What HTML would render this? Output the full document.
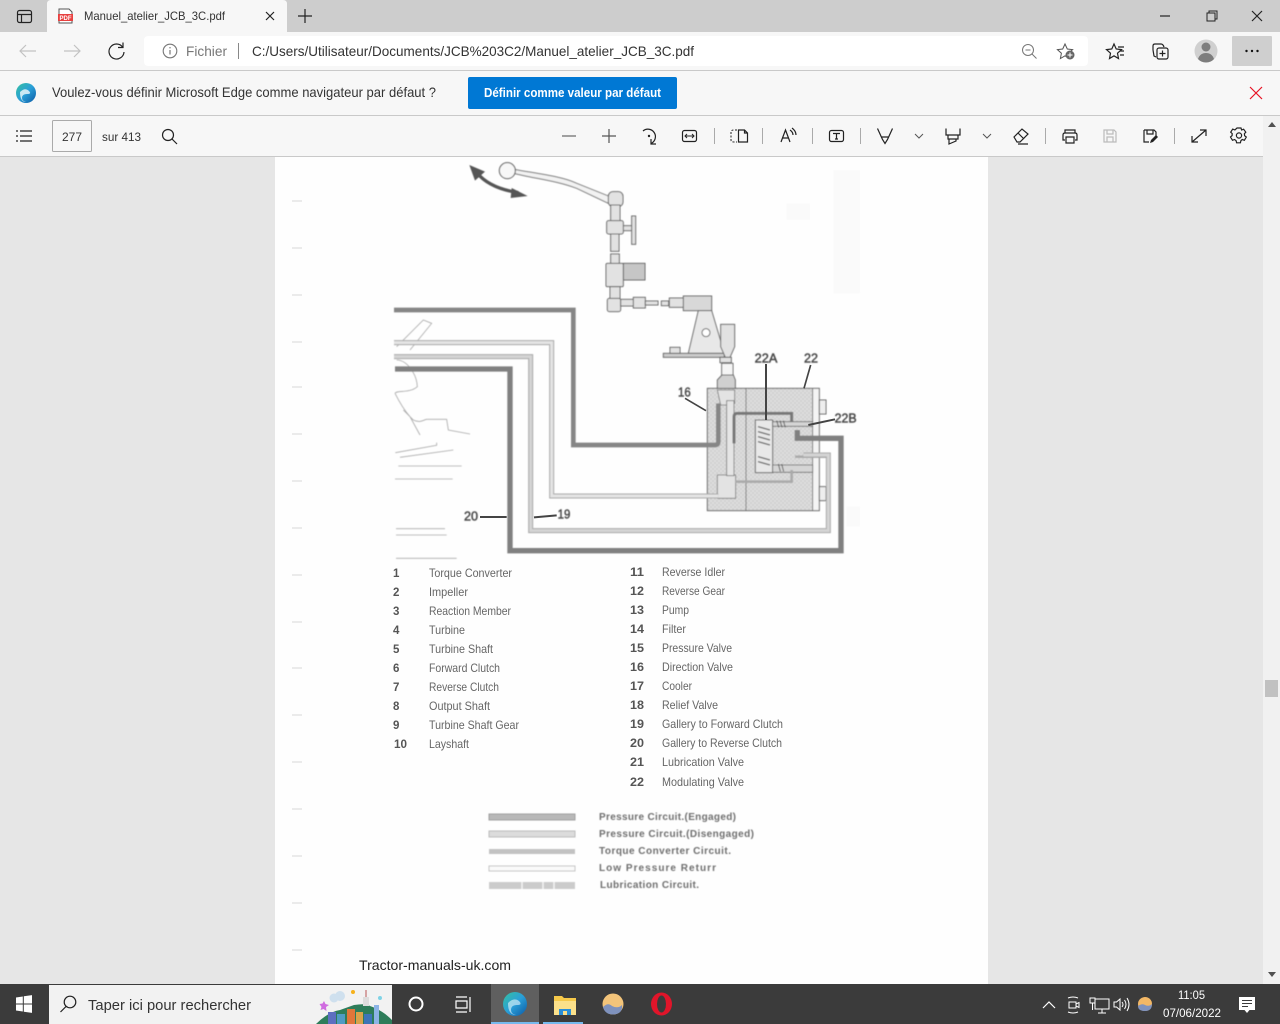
<!DOCTYPE html>
<html lang="fr"><head><meta charset="utf-8"><title>Manuel_atelier_JCB_3C.pdf</title>
<style>
html,body{margin:0;padding:0;width:1280px;height:1024px;overflow:hidden;background:#e6e6e6}
svg{display:block;position:absolute;left:0;top:0}
text{font-family:"Liberation Sans",sans-serif}
.i{fill:none;stroke:#222;stroke-width:1.2}
.l{font-size:12px;fill:#666}
.n{font-size:11.5px;fill:#555;font-weight:bold}
.k{font-size:10px;fill:#6e6e6e;font-weight:bold}
</style></head><body>
<svg width="1280" height="1024" viewBox="0 0 1280 1024" xmlns="http://www.w3.org/2000/svg">
<defs>
<pattern id="dots" width="12" height="12" patternUnits="userSpaceOnUse"><rect width="12" height="12" fill="#d2d2d2"/><circle cx="3" cy="3" r="2.600" fill="#e6e6e6"/><circle cx="9" cy="9" r="2.600" fill="#e6e6e6"/></pattern>
<filter id="b" x="-2%" y="-2%" width="104%" height="104%"><feGaussianBlur stdDeviation="1.500"/></filter>
<filter id="s" x="-2%" y="-20%" width="104%" height="140%"><feGaussianBlur stdDeviation=".35"/></filter>
<filter id="s2" x="-2%" y="-20%" width="104%" height="140%"><feGaussianBlur stdDeviation=".5"/></filter>
<linearGradient id="edge" x1="0" y1="0" x2="1" y2="1"><stop offset="0" stop-color="#35c1a0"/><stop offset=".5" stop-color="#2a9fd8"/><stop offset="1" stop-color="#0c59a4"/></linearGradient>
</defs>

<!-- Viewer background -->
<rect x="0" y="156" width="1263" height="828" fill="#e6e6e6"/>
<rect x="275" y="157" width="713" height="827" fill="#fefefe"/>
<rect x="1263" y="116" width="17" height="868" fill="#f1f1f1"/>
<rect x="1265" y="680" width="13" height="17" fill="#c1c1c1"/>
<path d="M1268 127l4-5 4 5zM1268 972l4 5 4-5z" fill="#505050"/>

<!-- Margin marks -->
<g stroke="#d8d8d8" stroke-width="1" fill="none">
<path d="M292 201h10M292 248h10M292 295h10M292 342h10M292 387h10M292 434h10M292 481h10M292 528h10M292 575h10M292 622h10M292 668h10M292 715h10M292 762h10M292 809h10M292 856h10M292 903h10M292 950h10"/>
</g>

<!-- Diagram, coordinates in 3x space -->
<g transform="translate(390 160) scale(.33333)">
<g filter="url(#b)">
<!-- scan noise -->
<g fill="#fafafa"><rect x="1330" y="30" width="80" height="370"/><rect x="1190" y="130" width="70" height="50"/><rect x="1370" y="1040" width="40" height="60"/></g>
<!-- left line fragments -->
<g fill="none" stroke="#aaa" stroke-width="2.500">
<path d="M20 600C50 600 80 640 82 680C60 700 20 690 15 700M15 700C30 730 42 750 60 770L90 825M40 750L70 780C90 790 100 780 110 778H170L175 810L240 822"/>
<path d="M16 878L140 856V848M30 892L190 870M25 918H215M15 957H188M18 1106H165M18 1125H170M18 1195H200M20 560L100 480L125 490L60 570"/>
</g>
<!-- valve block -->
<rect x="952" y="685" width="316" height="367" fill="url(#dots)"/>
<rect x="1268" y="685" width="20" height="367" fill="#f4f4f4"/>
<rect x="952" y="685" width="336" height="367" fill="none" stroke="#666" stroke-width="3"/>
<path d="M1068 685V1052M1268 685V1052" stroke="#666" stroke-width="2.500"/>
<path d="M1288 720h20v42h-20zM1288 980h20v42h-20z" fill="#eee" stroke="#666" stroke-width="3"/>
<path d="M982 690h52v40h-10v215h-10V735h-22zM982 945h55v70H982z" fill="#e3e3e3" stroke="#777" stroke-width="2.500"/>
<rect x="1010" y="722" width="22" height="225" fill="#e5e5e5" stroke="#777" stroke-width="2.500"/>
<rect x="1096" y="780" width="52" height="158" fill="#e8e8e8" stroke="#666" stroke-width="3"/>
<path d="M1104 800l36 10M1104 815l36 10M1104 830l36 10M1104 845l36 10M1104 890l36 10M1104 905l36 10" stroke="#666" stroke-width="4"/>
<path d="M1148 785h120v14h-120zM1148 915h120v22h-120z" fill="#d5d5d5" stroke="#666" stroke-width="2.500"/>
<path d="M1160 782l6 20M1170 782l6 20M1180 782l6 20M1165 912l6 22M1175 912l6 22" stroke="#444" stroke-width="2.500"/>
<path d="M1032 850V770Q1032 760 1042 760H1205V785" fill="none" stroke="#777" stroke-width="9"/>
<path d="M1035 965H1205V930M1215 890H1320" fill="none" stroke="#aaa" stroke-width="8"/>
<!-- pipes -->
<g fill="none" stroke-linejoin="miter">
<path d="M12 450H550V855H975Q985 855 985 845V730" stroke="#868686" stroke-width="14"/>
<path d="M12 548H485V1008H985" stroke="#a8a8a8" stroke-width="15"/>
<path d="M12 548H485V1008H985" stroke="#e4e4e4" stroke-width="9"/>
<path d="M12 590H422V1112H1315V885H1240" stroke="#a8a8a8" stroke-width="15"/>
<path d="M12 590H422V1112H1315V885H1240" stroke="#d4d4d4" stroke-width="9"/>
<path d="M15 627H360V1172H1353V835H1222V810" stroke="#808080" stroke-width="16"/>
</g>
<!-- lever -->
<path d="M262 40Q300 85 385 98" fill="none" stroke="#555" stroke-width="10"/>
<path d="M238 15L285 35L255 62zM413 108L365 84L362 114z" fill="#555"/>
<path d="M372 28C450 42 520 50 560 70L665 112L655 130L560 85C500 62 430 55 372 40z" fill="#f2f2f2" stroke="#777" stroke-width="3"/>
<circle cx="352" cy="32" r="24" fill="#f7f7f7" stroke="#555" stroke-width="3"/>
<g fill="#e2e2e2" stroke="#666" stroke-width="3">
<rect x="655" y="95" width="44" height="45" rx="14"/>
<rect x="662" y="135" width="28" height="50"/>
<rect x="690" y="197" width="36" height="15"/>
<rect x="725" y="168" width="12" height="85"/>
<rect x="650" y="182" width="50" height="40" rx="6"/>
<rect x="662" y="222" width="25" height="52"/>
<rect x="700" y="310" width="65" height="50" fill="#c6c6c6"/>
<path d="M662 282L688 282V320H662z"/>
<rect x="648" y="310" width="52" height="70" rx="4"/>
<rect x="660" y="380" width="30" height="60"/>
<rect x="652" y="415" width="40" height="40" rx="6"/>
<rect x="692" y="418" width="40" height="20"/>
<rect x="730" y="412" width="36" height="32"/>
<rect x="766" y="423" width="38" height="12"/>
<rect x="814" y="423" width="22" height="14"/>
<rect x="838" y="414" width="44" height="28"/>
<rect x="880" y="408" width="85" height="44" fill="#d8d8d8"/>
<path d="M925 452H965L1003 580H895z" fill="#e8e8e8"/>
<circle cx="948" cy="518" r="12" fill="#fff"/>
<rect x="820" y="580" width="183" height="12" fill="#ccc"/>
<rect x="840" y="562" width="30" height="18"/>
<path d="M992 493H1034V560L1020 592H1006L992 560z"/>
<rect x="990" y="592" width="34" height="16"/>
<rect x="995" y="610" width="34" height="36" fill="#f5f5f5"/>
<path d="M982 685V660L996 645H1030L1036 660V685z" fill="#d0d0d0"/>
</g>
</g>
<!-- leaders -->
<g stroke="#444" fill="none">
<path d="M1128 612V780" stroke-width="6"/><path d="M1262 615L1242 685" stroke-width="5"/>
<path d="M1335 778L1255 795" stroke-width="6"/><path d="M885 715L948 752" stroke-width="5"/>
<path d="M270 1071H350" stroke-width="6"/><path d="M500 1066L432 1072" stroke-width="6"/>
</g>
<g fill="#4a4a4a" stroke="#4a4a4a" stroke-width="1.500" font-size="38" filter="url(#b)">
<text x="1094" y="608" textLength="68" lengthAdjust="spacingAndGlyphs">22A</text>
<text x="1242" y="608" textLength="42" lengthAdjust="spacingAndGlyphs">22</text>
<text x="864" y="710" textLength="38" lengthAdjust="spacingAndGlyphs">16</text>
<text x="1334" y="787" textLength="66" lengthAdjust="spacingAndGlyphs">22B</text>
<text x="222" y="1081" textLength="42" lengthAdjust="spacingAndGlyphs">20</text>
<text x="503" y="1076" textLength="38" lengthAdjust="spacingAndGlyphs">19</text>
</g>
</g>

<!-- Legend list -->
<g filter="url(#s)">
<text class="n" x="393" y="577">1</text><text class="l" x="429" y="577" textLength="83" lengthAdjust="spacingAndGlyphs">Torque Converter</text>
<text class="n" x="393" y="596">2</text><text class="l" x="429" y="596" textLength="39" lengthAdjust="spacingAndGlyphs">Impeller</text>
<text class="n" x="393" y="615">3</text><text class="l" x="429" y="615" textLength="82" lengthAdjust="spacingAndGlyphs">Reaction Member</text>
<text class="n" x="393" y="634">4</text><text class="l" x="429" y="634" textLength="36" lengthAdjust="spacingAndGlyphs">Turbine</text>
<text class="n" x="393" y="653">5</text><text class="l" x="429" y="653" textLength="64" lengthAdjust="spacingAndGlyphs">Turbine Shaft</text>
<text class="n" x="393" y="672">6</text><text class="l" x="429" y="672" textLength="71" lengthAdjust="spacingAndGlyphs">Forward Clutch</text>
<text class="n" x="393" y="691">7</text><text class="l" x="429" y="691" textLength="70" lengthAdjust="spacingAndGlyphs">Reverse Clutch</text>
<text class="n" x="393" y="710">8</text><text class="l" x="429" y="710" textLength="61" lengthAdjust="spacingAndGlyphs">Output Shaft</text>
<text class="n" x="393" y="729">9</text><text class="l" x="429" y="729" textLength="90" lengthAdjust="spacingAndGlyphs">Turbine Shaft Gear</text>
<text class="n" x="394" y="748" textLength="13" lengthAdjust="spacingAndGlyphs">10</text><text class="l" x="429" y="748" textLength="40" lengthAdjust="spacingAndGlyphs">Layshaft</text>

<text class="n" x="630" y="576" textLength="14" lengthAdjust="spacingAndGlyphs">11</text><text class="l" x="662" y="576" textLength="63" lengthAdjust="spacingAndGlyphs">Reverse Idler</text>
<text class="n" x="630" y="595" textLength="14" lengthAdjust="spacingAndGlyphs">12</text><text class="l" x="662" y="595" textLength="63" lengthAdjust="spacingAndGlyphs">Reverse Gear</text>
<text class="n" x="630" y="614" textLength="14" lengthAdjust="spacingAndGlyphs">13</text><text class="l" x="662" y="614" textLength="27" lengthAdjust="spacingAndGlyphs">Pump</text>
<text class="n" x="630" y="633" textLength="14" lengthAdjust="spacingAndGlyphs">14</text><text class="l" x="662" y="633" textLength="24" lengthAdjust="spacingAndGlyphs">Filter</text>
<text class="n" x="630" y="652" textLength="14" lengthAdjust="spacingAndGlyphs">15</text><text class="l" x="662" y="652" textLength="70" lengthAdjust="spacingAndGlyphs">Pressure Valve</text>
<text class="n" x="630" y="671" textLength="14" lengthAdjust="spacingAndGlyphs">16</text><text class="l" x="662" y="671" textLength="71" lengthAdjust="spacingAndGlyphs">Direction Valve</text>
<text class="n" x="630" y="690" textLength="14" lengthAdjust="spacingAndGlyphs">17</text><text class="l" x="662" y="690" textLength="30" lengthAdjust="spacingAndGlyphs">Cooler</text>
<text class="n" x="630" y="709" textLength="14" lengthAdjust="spacingAndGlyphs">18</text><text class="l" x="662" y="709" textLength="56" lengthAdjust="spacingAndGlyphs">Relief Valve</text>
<text class="n" x="630" y="728" textLength="14" lengthAdjust="spacingAndGlyphs">19</text><text class="l" x="662" y="728" textLength="121" lengthAdjust="spacingAndGlyphs">Gallery to Forward Clutch</text>
<text class="n" x="630" y="747" textLength="14" lengthAdjust="spacingAndGlyphs">20</text><text class="l" x="662" y="747" textLength="120" lengthAdjust="spacingAndGlyphs">Gallery to Reverse Clutch</text>
<text class="n" x="630" y="766" textLength="14" lengthAdjust="spacingAndGlyphs">21</text><text class="l" x="662" y="766" textLength="82" lengthAdjust="spacingAndGlyphs">Lubrication Valve</text>
<text class="n" x="630" y="786" textLength="14" lengthAdjust="spacingAndGlyphs">22</text><text class="l" x="662" y="786" textLength="82" lengthAdjust="spacingAndGlyphs">Modulating Valve</text>
</g>

<!-- Circuit legend -->
<g filter="url(#s2)">
<rect x="489" y="814" width="86" height="6" fill="#b8b8b8" stroke="#a0a0a0"/>
<rect x="489" y="831" width="86" height="6" fill="#dcdcdc" stroke="#bbb"/>
<rect x="489" y="849" width="86" height="5" fill="#c2c2c2"/>
<rect x="489" y="866" width="86" height="5" fill="#fafafa" stroke="#c4c4c4"/>
<rect x="489" y="882" width="86" height="7" fill="#cbcbcb"/>
<path d="M522 882v7M543 882v7M554 882v7" stroke="#f4f4f4" stroke-width="1.500"/>
<text class="k" x="599" y="820" textLength="137" lengthAdjust="spacing">Pressure Circuit.(Engaged)</text>
<text class="k" x="599" y="837" textLength="155" lengthAdjust="spacing">Pressure  Circuit.(Disengaged)</text>
<text class="k" x="599" y="854" textLength="132" lengthAdjust="spacing">Torque Converter Circuit.</text>
<text class="k" x="599" y="871" textLength="117" lengthAdjust="spacing">Low Pressure Returr</text>
<text class="k" x="600" y="888" textLength="99" lengthAdjust="spacing">Lubrication Circuit.</text>
</g>
<text x="359" y="970" font-size="14" fill="#222" textLength="152" lengthAdjust="spacingAndGlyphs">Tractor-manuals-uk.com</text>

<!-- Tab bar -->
<rect x="0" y="0" width="1280" height="32" fill="#cdcdcd"/>
<path d="M47 32V4Q47 0 51 0H283Q287 0 287 4V32z" fill="#f7f7f7"/>
<rect x="17.500" y="10.500" width="14" height="12" rx="2" class="i"/>
<path d="M17.500 14.500h14M21.500 14.500v8" class="i"/>
<path d="M59 9h10l3 3v11H59z" fill="#fff" stroke="#555"/>
<rect x="58" y="14" width="15" height="7" fill="#e8403f"/>
<text x="59.500" y="20" font-size="6" font-weight="bold" fill="#fff">PDF</text>
<text x="84" y="20" font-size="12" fill="#333" textLength="141" lengthAdjust="spacingAndGlyphs">Manuel_atelier_JCB_3C.pdf</text>
<path d="M266 12l8 8M274 12l-8 8" class="i"/>
<path d="M305 9v14M298 16h14" class="i"/>
<path d="M1160 16h10" class="i"/>
<path d="M1207 13h8v8h-8zM1209 13v-2h8v8h-2" class="i" style="stroke-width:1"/>
<path d="M1252 11l10 10M1262 11l-10 10" class="i"/>

<!-- Navigation bar -->
<rect x="0" y="32" width="1280" height="38" fill="#f7f7f7"/>
<rect x="0" y="70" width="1280" height="1" fill="#c9c9c9"/>
<rect x="144" y="36" width="944" height="30" rx="4" fill="#fff"/>
<path d="M20 51h16M26 45l-6 6 6 6" fill="none" stroke="#c2c2c2" stroke-width="1.200"/>
<path d="M80 51H64M74 45l6 6-6 6" fill="none" stroke="#c2c2c2" stroke-width="1.200"/>
<path d="M122.500 47A7.500 7.500 0 1 0 124 52M123 42.500V47.500H118" class="i"/>
<circle cx="170" cy="51" r="6.800" fill="none" stroke="#777" stroke-width="1.100"/>
<path d="M170 50v4.500M170 47v1.400" stroke="#777" stroke-width="1.200"/>
<text x="186" y="56" font-size="14" fill="#777" textLength="41" lengthAdjust="spacingAndGlyphs">Fichier</text>
<rect x="238" y="43" width="1" height="16" fill="#888"/>
<text x="252" y="56" font-size="14" fill="#333" textLength="442" lengthAdjust="spacingAndGlyphs">C:/Users/Utilisateur/Documents/JCB%203C2/Manuel_atelier_JCB_3C.pdf</text>
<circle cx="1028" cy="50" r="5.500" fill="none" stroke="#777"/><path d="M1025.500 50h5M1032 54l4.500 4.500" stroke="#777" fill="none"/>
<path d="M1065 44l2.300 5 5.300.6-4 3.600 1 5.300-4.600-2.700-4.600 2.700 1-5.300-4-3.600 5.300-.6z" fill="none" stroke="#555"/>
<circle cx="1070" cy="55" r="4.500" fill="#666"/><path d="M1067.500 55h5M1070 52.500v5" stroke="#fff"/>
<path d="M1114 44l2.200 5 5.300.6-4 3.600 1 5.300-4.500-2.700-4.500 2.700 1-5.300-4-3.600 5.300-.6zM1118 47h6M1120 51h4M1120 55h4" class="i"/>
<path d="M1153 50v-4q0-2 2-2h6q2 0 3 3M1153 50l1 6 2 1" class="i"/>
<rect x="1157" y="48" width="11" height="11" rx="2" class="i"/><path d="M1162.500 50.500v6M1159.500 53.500h6" class="i"/>
<ellipse cx="1206" cy="51" rx="11.500" ry="11.500" fill="#d0d0d0"/><circle cx="1206" cy="47" r="4.500" fill="#7d7d7d"/><path d="M1198 59q2-6 8-6t8 6q-3 3.500-8 3.500t-8-3.500z" fill="#7d7d7d"/>
<rect x="1232" y="36" width="40" height="30" rx="1" fill="#cfcfcf"/>
<g fill="#111"><circle cx="1246.500" cy="51" r="1.200"/><circle cx="1252" cy="51" r="1.200"/><circle cx="1257.500" cy="51" r="1.200"/></g>

<!-- Info bar -->
<rect x="0" y="71" width="1280" height="44" fill="#f7f7f7"/>
<rect x="0" y="115" width="1280" height="1" fill="#c9c9c9"/>
<circle cx="26" cy="93" r="10" fill="url(#edge)"/>
<path d="M20 92q5-5 9-1 3 3-2 3-5 0-5 4 0 3 4 4-6 0-6-10z" fill="#fff" opacity=".75"/>
<text x="52" y="97" font-size="14" fill="#333" textLength="384" lengthAdjust="spacingAndGlyphs">Voulez-vous définir Microsoft Edge comme navigateur par défaut ?</text>
<rect x="468" y="77" width="209" height="32" rx="2" fill="#0078d4"/>
<text x="484" y="97" font-size="12.500" font-weight="bold" fill="#fff" textLength="177" lengthAdjust="spacingAndGlyphs">Définir comme valeur par défaut</text>
<path d="M1250 87l12 12M1262 87l-12 12" stroke="#e81123" stroke-width="1.200" fill="none"/>

<!-- PDF toolbar -->
<rect x="0" y="116" width="1263" height="40" fill="#f7f7f7"/>
<rect x="0" y="156" width="1263" height="1" fill="#c9c9c9"/>
<path d="M20 131h12M20 136h12M20 141h12" class="i"/><path d="M16 131h2M16 136h2M16 141h2" class="i"/>
<rect x="52.500" y="120.500" width="39" height="31" rx="1" fill="#f7f7f7" stroke="#aaa"/>
<text x="62" y="141" font-size="12" fill="#333" textLength="20" lengthAdjust="spacingAndGlyphs">277</text>
<text x="102" y="141" font-size="12" fill="#333" textLength="39" lengthAdjust="spacingAndGlyphs">sur 413</text>
<circle cx="168" cy="135" r="5.500" class="i"/><path d="M172 139l5 5" class="i"/>
<path d="M562 136h14" fill="none" stroke="#666" stroke-width="1.200"/>
<path d="M602 136h14M609 129v14" fill="none" stroke="#555" stroke-width="1.200"/>
<path d="M643 131a7.500 7.500 0 1 1 8 12.500M651 139v5h5" class="i"/><circle cx="649" cy="136" r="1.200" fill="#222"/>
<rect x="682.500" y="130.500" width="14" height="11" rx="2" class="i"/><path d="M685 136h9M687 134l-2 2 2 2M692 134l2 2-2 2" class="i" style="stroke-width:1"/>
<path d="M737 130h-3q-3 0-3 2v8q0 2 3 2h3" fill="none" stroke="#222" stroke-dasharray="2 1.500"/>
<path d="M738.500 130h6l3 3v9h-9zM744.500 130v3h3" class="i"/>
<path d="M781 142l4.500-12 4.500 12M782.500 138h6M790 130q3 2 3 5M792 128q4 3 4 7" class="i"/>
<rect x="829.500" y="130.500" width="14" height="11" rx="2" class="i"/><path d="M833 133.500h7M836.500 133.500v5.500M835 139h3" class="i"/>
<path d="M877.500 128.500l5 11 2.500 4 2.500-4 5-11M881.500 137h7" class="i"/>
<path d="M915 134l4 4 4-4" fill="none" stroke="#555"/>
<path d="M946 128.500v6.500h14v-6.500M948 135v4h10v-4M949 139v5l7-3v-2" class="i"/>
<path d="M983 134l4 4 4-4" fill="none" stroke="#555"/>
<path d="M1014 137l8-8 6 5-8 8h-3zM1018 133l6 6M1018 144h10" class="i"/>
<path d="M1065 133v-3h10v3M1065 140h-2v-5q0-2 2-2h10q2 0 2 2v5h-2M1066 137h8v6h-8z" class="i"/>
<path d="M1104 130h10l2 2v10h-12zM1107 130v4h6v-4M1107 142v-5h6v5" fill="none" stroke="#bbb" stroke-width="1.200"/>
<path d="M1144 130h10l2 2v4M1144 130v12h5M1147 130v4h6v-4" class="i"/><path d="M1150 143l1-3 5-5 2 2-5 5z" fill="#222"/>
<path d="M1192 142l14-12M1200 130h6v6M1192 136v6h6" class="i"/>
<circle cx="1239" cy="135.500" r="2.600" class="i"/>
<path d="M1237 128h4l.6 2 2-.8 2.200 3-1.400 1.500.2 2 1.700 1.300-1.900 3.300-2.200-.8-1.300 1.200-.5 2.100h-3.800l-.5-2.100-1.500-1.200-2.100.8-2-3.300 1.600-1.400.1-2-1.500-1.400 2-3.100 2.200.8z" class="i"/>
<g fill="#aaa"><rect x="714" y="128" width="1" height="16"/><rect x="762" y="128" width="1" height="16"/><rect x="812" y="128" width="1" height="16"/><rect x="860" y="128" width="1" height="16"/><rect x="1045" y="128" width="1" height="16"/><rect x="1174" y="128" width="1" height="16"/></g>

<!-- Taskbar -->
<rect x="0" y="984" width="1280" height="40" fill="#3b3b3b"/>
<path d="M16 997.500l6.800-1v7h-6.800zM23.800 996.300l8.200-1.200v8.400h-8.200zM16 1004.500h6.800v7l-6.800-1zM23.800 1004.500H32v8.400l-8.200-1.200z" fill="#fff"/>
<rect x="49" y="985" width="343" height="39" fill="#f2f2f2"/>
<circle cx="70" cy="1002" r="5.800" fill="none" stroke="#222" stroke-width="1.200"/><path d="M66 1006.500l-5.500 5.500" stroke="#222" stroke-width="1.200"/>
<text x="88" y="1010" font-size="15" fill="#333" textLength="163" lengthAdjust="spacingAndGlyphs">Taper ici pour rechercher</text>
<path d="M316 1024q12-12 24-14l14-5q12-2 16 1 12 4 22 14v4z" fill="#2e7d5a"/>
<rect x="328" y="1012" width="8" height="12" fill="#5d6fc0"/><rect x="337" y="1014" width="8" height="10" fill="#4f9bc4"/><rect x="347" y="1009" width="8" height="15" fill="#e0763a"/><rect x="356" y="1012" width="7" height="12" fill="#d9a24a"/><rect x="364" y="1014" width="8" height="10" fill="#3d74b8"/><rect x="374" y="1005" width="5" height="19" fill="#8db4e6"/>
<path d="M363 997h6v9h-6z" fill="#ddd"/><path d="M366 990v7" stroke="#b55"/><circle cx="334" cy="998" r="4.500" fill="#cfe0ee"/><circle cx="340" cy="996" r="5" fill="#cfe0ee"/><circle cx="353" cy="992" r="2" fill="#f6b21b"/><circle cx="380" cy="998" r="2" fill="#7fd3e6"/>
<path d="M324 1001l1.500 3 3.500 1-3 2 .5 4-3-2-3 1 1-3-2-3 3-.5z" fill="#d06ce0"/>
<circle cx="416" cy="1004" r="6.500" fill="none" stroke="#fff" stroke-width="2"/>
<path d="M456 1001h11v7h-11zM456 997h11M456 1012h11M470 997v15" fill="none" stroke="#fff" stroke-width="1.200"/>
<rect x="491" y="984" width="48" height="40" fill="#5f5f5f"/>
<rect x="491" y="1022" width="48" height="2" fill="#76b9ed"/><rect x="543" y="1022" width="40" height="2" fill="#76b9ed"/>
<circle cx="515" cy="1004" r="12" fill="url(#edge)"/>
<path d="M508 1003q6-6 11-2 4 4-2 4-6 0-6 5 0 4 5 5-8 0-8-12z" fill="#e8f6fb" opacity=".6"/>
<path d="M554 996h8l2 2h12v17h-22z" fill="#f6c94a"/><path d="M554 1001h22v14h-22z" fill="#fbe08a"/><rect x="559" y="1009" width="12" height="6" fill="#2a8fd8"/><rect x="563" y="1011" width="4" height="4" fill="#fbe08a"/>
<circle cx="613" cy="1004" r="10.500" fill="#f3c47a"/><path d="M603 1007q5-5 9-1 6 3 10-1 1 9-9 9.500-8 0-10-7.500z" fill="#7f92bd"/>
<ellipse cx="661.500" cy="1004" rx="10.500" ry="11.500" fill="#e0152a"/><ellipse cx="661.500" cy="1004" rx="4.500" ry="8.500" fill="#3b3b3b"/>
<path d="M1043 1008l6-6 6 6" fill="none" stroke="#fff" stroke-width="1.200"/>
<path d="M1069 1002h7v6h-7zM1076 1004l3-1.500v5l-3-1.500M1068 998q5-2 10 0M1068 1012q5 2 10 0" fill="none" stroke="#fff"/>
<path d="M1095 999h14v10h-14zM1102 1009v4M1098 1013h8M1090 998h5v5h-5zM1092.500 1003v7" fill="none" stroke="#fff"/>
<path d="M1114 1002h2.500l3.500-3v11l-3.500-3H1114zM1122 1002q2 2.500 0 5M1124.500 1000q3 4.500 0 9M1127 998q4 6.500 0 13" fill="none" stroke="#fff"/>
<circle cx="1145" cy="1004" r="7" fill="#f3b866"/><path d="M1138 1006q4-3 7-1 4 2 7-1 0 7-7 7t-7-5z" fill="#7f92bd"/>
<text x="1178" y="999" font-size="12" fill="#fff" textLength="27" lengthAdjust="spacingAndGlyphs">11:05</text>
<text x="1163" y="1017" font-size="12" fill="#fff" textLength="58" lengthAdjust="spacingAndGlyphs">07/06/2022</text>
<path d="M1239 997h16v13h-5.500l-2.500 3-2.500-3h-5.500z" fill="#fff"/><path d="M1242 1000.500h10M1242 1003.500h10M1242 1006.500h6" stroke="#3b3b3b"/>
</svg>
</body></html>
